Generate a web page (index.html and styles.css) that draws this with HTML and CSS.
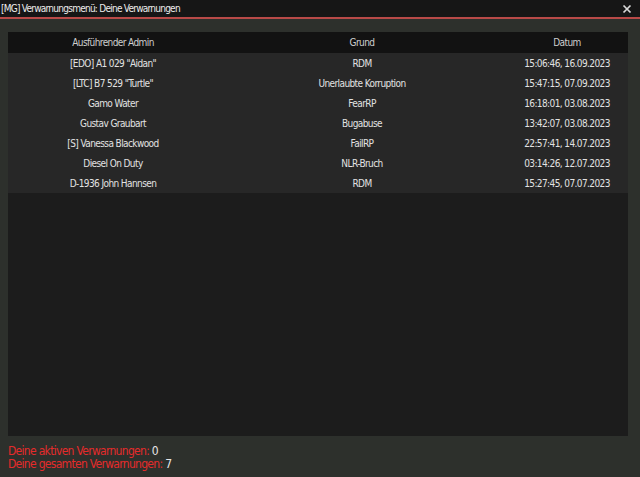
FILE: index.html
```html
<!DOCTYPE html>
<html lang="de">
<head>
<meta charset="utf-8">
<title>Verwarnungsmenü</title>
<link rel="stylesheet" href="styles.css">
</head>
<body>
<div class="window">
  <div class="titlebar">
    <span class="title">[MG] Verwarnungsmenü: Deine Verwarnungen</span>
    <svg class="close" width="10" height="10" viewBox="0 0 10 10"><path d="M1.5 1.5 L8.5 8.5 M8.5 1.5 L1.5 8.5" stroke="#d8d8d8" stroke-width="1.7" fill="none"/></svg>
  </div>
  <div class="content">
    <div class="panel">
      <div class="row head">
        <div>Ausführender Admin</div><div>Grund</div><div>Datum</div>
      </div>
      <div class="row"><div>[EDO] A1 029 "Aidan"</div><div>RDM</div><div>15:06:46, 16.09.2023</div></div>
      <div class="row"><div>[LTC] B7 529 "Turtle"</div><div>Unerlaubte Korruption</div><div>15:47:15, 07.09.2023</div></div>
      <div class="row"><div>Gamo Water</div><div>FearRP</div><div>16:18:01, 03.08.2023</div></div>
      <div class="row"><div>Gustav Graubart</div><div>Bugabuse</div><div>13:42:07, 03.08.2023</div></div>
      <div class="row"><div>[S] Vanessa Blackwood</div><div>FailRP</div><div>22:57:41, 14.07.2023</div></div>
      <div class="row"><div>Diesel On Duty</div><div>NLR-Bruch</div><div>03:14:26, 12.07.2023</div></div>
      <div class="row"><div>D-1936 John Hannsen</div><div>RDM</div><div>15:27:45, 07.07.2023</div></div>
    </div>
    <div class="stats">
      <div>Deine aktiven Verwarnungen: <span class="num">0</span></div>
      <div>Deine gesamten Verwarnungen: <span class="num">7</span></div>
    </div>
  </div>
</div>
</body>
</html>
```
FILE: styles.css
```css
html, body {
  margin: 0;
  padding: 0;
  background: #2c2f2b;
}
body {
  font-family: "DejaVu Sans Condensed", "DejaVu Sans", sans-serif;
  font-size: 10px;
  letter-spacing: -0.6px;
  color: #e0e0e0;
  width: 640px;
  height: 477px;
  overflow: hidden;
}
.window {
  display: flex;
  flex-direction: column;
  height: 477px;
}
.titlebar {
  height: 17px;
  background: #161616;
  border-bottom: 2px solid #b94a48;
  display: flex;
  align-items: center;
  justify-content: space-between;
  padding: 0 8px 0 1px;
}
.title {
  color: #ececec;
  letter-spacing: -0.75px;
}
.close {
  display: block;
}
.content {
  flex: 1;
  background: #2d302c;
  padding: 13px 12px 0 8px;
  display: flex;
  flex-direction: column;
}
.panel {
  height: 404px;
  background: #1c1c1c;
}
.row {
  display: grid;
  grid-template-columns: 210px 288px 122px;
  height: 20px;
  align-items: center;
  background: #272727;
  text-align: center;
  color: #e2e2e2;
}
.row.head {
  background: #121212;
  color: #cfcfcf;
  height: 21px;
}
.stats {
  padding: 9px 0 0 0;
  color: #e52b2b;
  font-size: 12px;
  letter-spacing: -0.7px;
  line-height: 13px;
}
.num {
  color: #e6e6e6;
}
```
